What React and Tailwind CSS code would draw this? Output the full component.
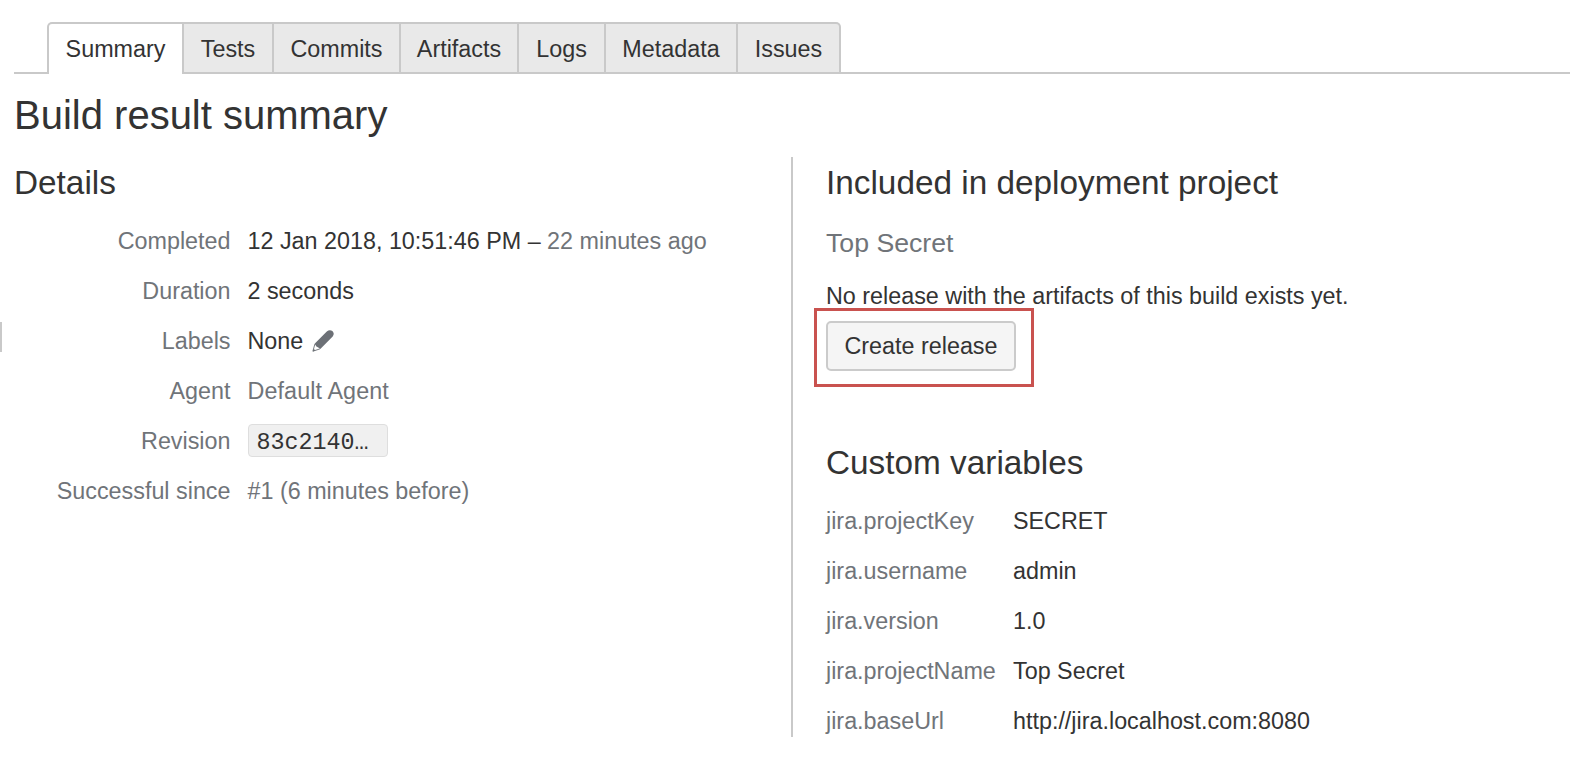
const tabs = [
  { name: 'Tests', width: 'w-[90px]' },
  { name: 'Commits', width: 'w-[127px]' },
  { name: 'Artifacts', width: 'w-[118px]' },
  { name: 'Logs', width: 'w-[87px]' },
  { name: 'Metadata', width: 'w-[132px]' },
  { name: 'Issues', width: 'w-[103px] rounded-tr-[5px]' },
];

const variables = [
  ['jira.projectKey', 'SECRET'],
  ['jira.username', 'admin'],
  ['jira.version', '1.0'],
  ['jira.projectName', 'Top Secret'],
  ['jira.baseUrl', 'http://jira.localhost.com:8080'],
];

function Pencil() {
  return (
    <svg className="ml-[9px] h-[22px] w-[22px]" viewBox="0 0 22 22">
      <path d="M2.600 13.800 14.800 1.600Q17.300 -.7 20.400 .9Q22.900 3.500 20.700 6.400L8.300 19 6.300 17.600 4.400 16.400Z" fill="#6c7076" />
      <path d="M2.900 14 .9 21.200 7.900 18.900" fill="none" stroke="#6c7076" strokeWidth="0.900" strokeLinejoin="round" />
      <path d="M.8 21.500 1.600 18.800 3.500 20.600Z" fill="#6c7076" />
    </svg>
  );
}

function Detail({ label, children }) {
  return (
    <div className="flex h-[50px] items-center">
      <dt className="w-[216.5px] text-right text-[#707479]">{label}</dt>
      <dd className="ml-[17px] flex items-center">{children}</dd>
    </div>
  );
}

export default function App() {
  return (
    <div className="flex h-[757px] w-[1586px] flex-col overflow-hidden bg-white font-['Liberation_Sans',Arial,sans-serif] text-[23.33px] leading-[50px] whitespace-nowrap text-[#333]">
      <nav className="mt-[22px] ml-[14px] flex h-[52px] w-[1556px]">
        <div className="w-[33px] border-b-2 border-[#c9c9c9]" />
        <div className="flex w-[137px] justify-center rounded-tl-[5px] border-x-2 border-t-2 border-[#c9c9c9] leading-[51px]">
          Summary
        </div>
        {tabs.map((tab) => (
          <div
            key={tab.name}
            className={`flex justify-center border-y-2 border-r-2 border-[#c9c9c9] bg-[#e9e9e9] leading-[51px] ${tab.width}`}
          >
            {tab.name}
          </div>
        ))}
        <div className="flex-1 border-b-2 border-[#c9c9c9]" />
      </nav>

      <h1 className="mt-[16px] ml-[14px] h-[50px] text-[40px]">Build result summary</h1>

      <div className="mt-[17px] flex h-[580px]">
        <div className="mt-[165px] h-[30px] w-[2px] bg-[#c9c9c9]" />
        <section className="ml-[12px] w-[777px]">
          <h2 className="h-[59px] text-[33.33px] leading-[52px]">Details</h2>
          <dl>
            <Detail label="Completed">
              <span className="whitespace-pre">12 Jan 2018, 10:51:46 PM – </span>
              <span className="text-[#707479]">22 minutes ago</span>
            </Detail>
            <Detail label="Duration">2 seconds</Detail>
            <Detail label="Labels">
              None
              <Pencil />
            </Detail>
            <Detail label="Agent">
              <span className="tracking-[0.1px] text-[#707479]">Default Agent</span>
            </Detail>
            <Detail label="Revision">
              <code className="mb-[2px] h-[33px] w-[140px] rounded-[4px] border border-[#dedede] bg-[#f0f0f0] pl-[8px] font-['Liberation_Mono','Courier_New',monospace] text-[23.33px] leading-[36px]">
                83c2140…
              </code>
            </Detail>
            <Detail label="Successful since">
              <span className="text-[#707479]">#1 (6 minutes before)</span>
            </Detail>
          </dl>
        </section>

        <section className="w-[795px] border-l-2 border-[#c9c9c9] pl-[33px]">
          <h2 className="h-[59px] text-[33.33px] leading-[52px]">Included in deployment project</h2>
          <h3 className="h-[55px] text-[26.67px] leading-[55px] text-[#707479]">Top Secret</h3>
          <p className="h-[37px]">No release with the artifacts of this build exists yet.</p>
          <div className="-ml-[12px] flex h-[79px] w-[220px] border-[3px] border-[#c9524f] pt-[10px] pl-[9px]">
            <button className="h-[50px] w-[190px] rounded-[5px] border-2 border-[#cbcbcb] bg-[#f5f5f5] leading-[45px]">
              Create release
            </button>
          </div>
          <h2 className="mt-[50px] h-[59px] text-[33.33px] leading-[52px]">Custom variables</h2>
          <dl>
            {variables.map(([key, value]) => (
              <div key={key} className="flex h-[50px]">
                <dt className="w-[187px] text-[#707479]">{key}</dt>
                <dd>{value}</dd>
              </div>
            ))}
          </dl>
        </section>
      </div>
    </div>
  );
}
